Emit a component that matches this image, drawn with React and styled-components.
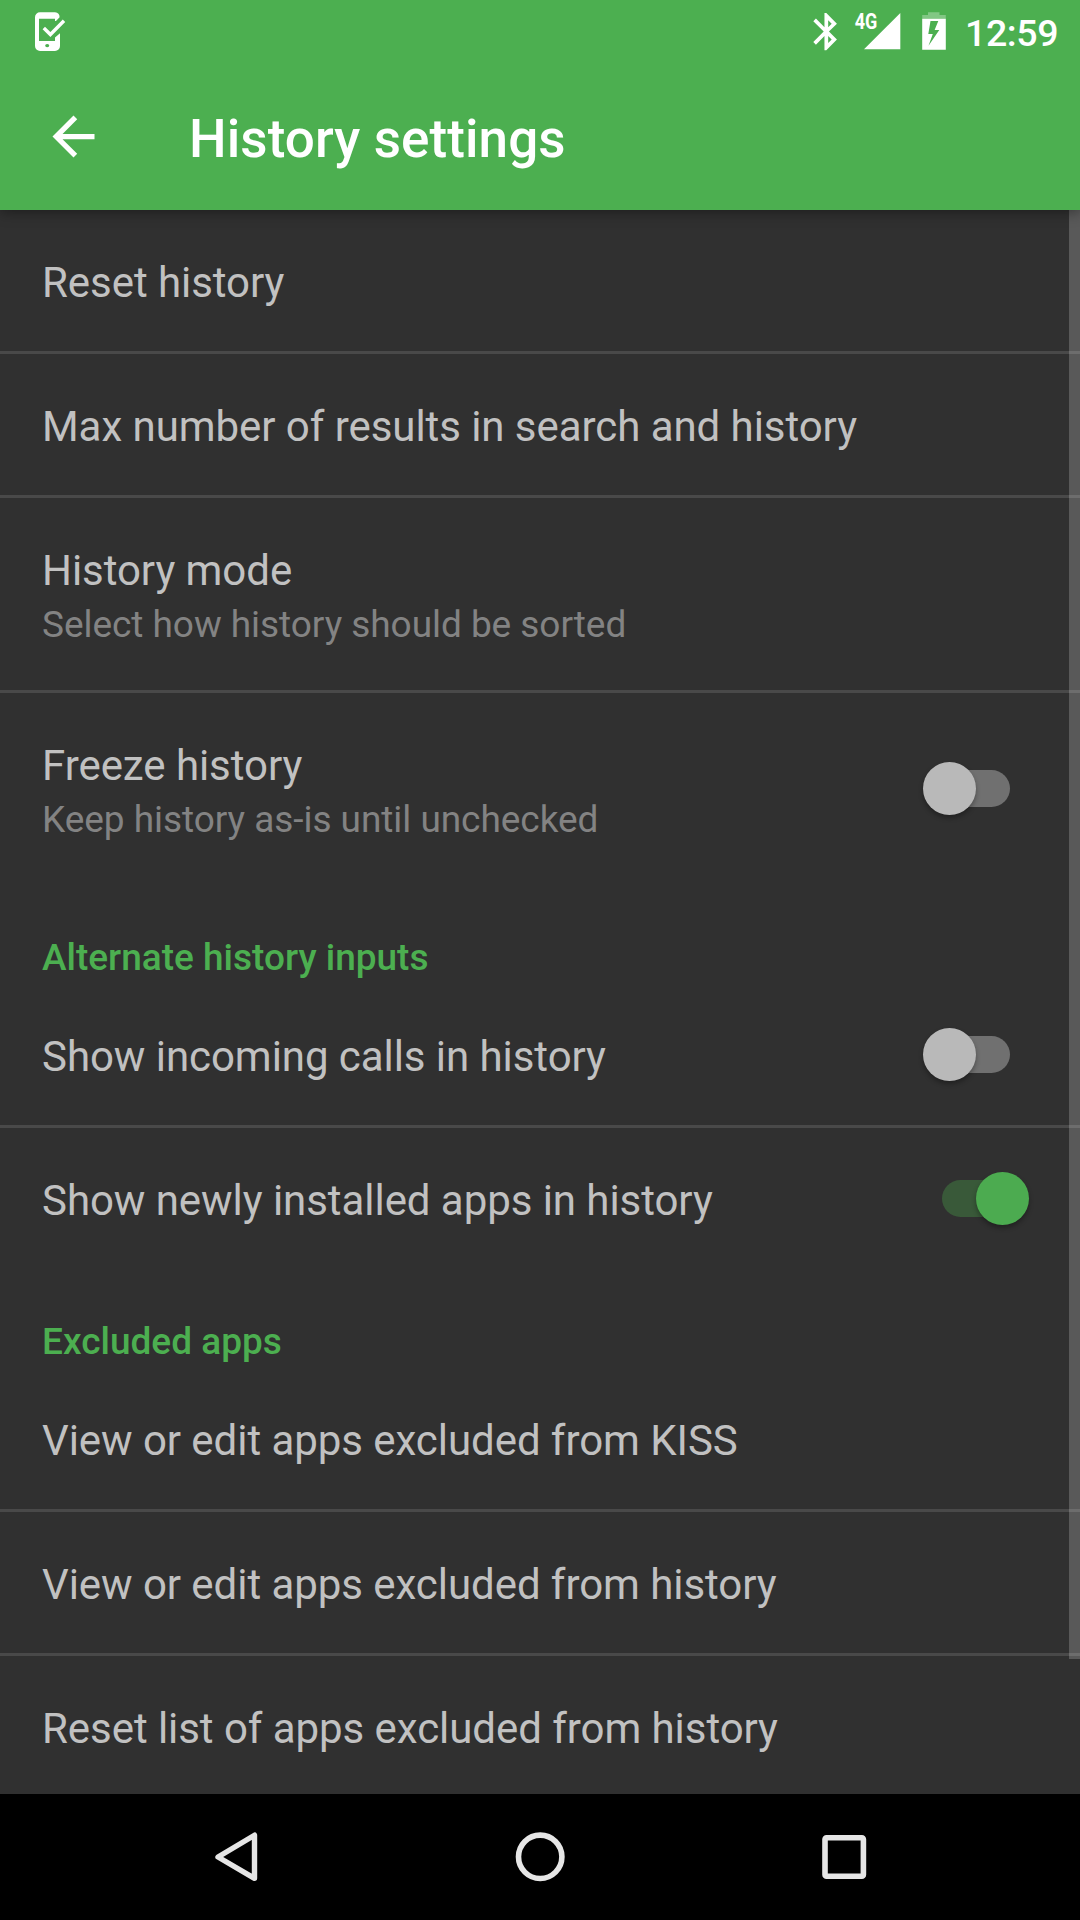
import React from "react";
import styled, { createGlobalStyle } from "styled-components";

const GlobalStyle = createGlobalStyle`
  * { box-sizing: border-box; }
  html, body { margin: 0; padding: 0; background: #000; }
  body { font-family: Roboto, "Noto Sans", sans-serif; overflow: hidden; }
`;

const Screen = styled.div`
  width: 1080px;
  height: 1920px;
  display: flex;
  flex-direction: column;
  background: #303030;
  overflow: hidden;
`;

const Header = styled.header`
  flex: none;
  height: 210px;
  display: flex;
  flex-direction: column;
  background: #4caf50;
  position: relative;
  z-index: 1;
  box-shadow: 0 3px 12px rgba(0, 0, 0, 0.36);
`;

const StatusBar = styled.div`
  height: 72px;
  display: flex;
  align-items: flex-start;
  padding: 0 22px 0 32px;
  color: #fff;
`;

const StatusIcons = styled.div`
  margin-left: auto;
  display: flex;
  align-items: flex-start;
`;

const StatusSvg = styled.svg`
  display: block;
  flex: none;
  margin-right: ${(p) => p.$gap || 0}px;
`;

const Clock = styled.span`
  width: 93px;
  font-size: 37.5px;
  font-weight: 500;
  line-height: 44px;
  padding-top: 11px;
  letter-spacing: -0.4px;
  white-space: nowrap;
`;

const AppBar = styled.div`
  flex: 1;
  display: flex;
  align-items: center;
  padding-left: 42px;
  color: #fff;
`;

const BackButton = styled.button`
  display: flex;
  width: 64px;
  height: 64px;
  padding: 0;
  border: 0;
  background: none;
  color: inherit;
  margin: 0 83px 8px 0;
`;

const PageTitle = styled.h1`
  margin: 0 0 4px;
  font-size: 53px;
  font-weight: 500;
  line-height: 64px;
  letter-spacing: 0.1px;
  white-space: nowrap;
`;

const Content = styled.main`
  flex: 1;
  min-height: 0;
  position: relative;
  overflow: hidden;
`;

const Row = styled.div`
  height: ${(p) => (p.$tall ? 192 : 141)}px;
  display: flex;
  align-items: center;
  justify-content: space-between;
  padding: 0 51px 0 42px;
`;

const Divider = styled.hr`
  height: 3px;
  margin: 0;
  border: 0;
  background: #494949;
`;

const Labels = styled.div`
  display: flex;
  flex-direction: column;
`;

const Title = styled.span`
  font-size: 42px;
  line-height: 50px;
  padding-top: 5px;
  color: #c1c1c1;
  white-space: nowrap;
  letter-spacing: -0.055px;
`;

const Summary = styled.span`
  margin: 3px 0 -3px;
  font-size: 37px;
  line-height: 52px;
  letter-spacing: -0.05px;
  color: #838383;
  white-space: nowrap;
`;

const Category = styled.h2`
  height: 99px;
  margin: 0;
  padding: 52px 42px 0;
  font-size: 37px;
  line-height: 42px;
  font-weight: 500;
  color: #4caf50;
  white-space: nowrap;
`;

const Switch = styled.div`
  width: 106px;
  height: 53px;
  margin-bottom: ${(p) => (p.$tall ? 1 : 0)}px;
  display: grid;
  align-items: center;
  & > * { grid-area: 1 / 1; }
`;

const Track = styled.div`
  width: 68px;
  height: 37px;
  border-radius: 19px;
  justify-self: center;
  background: ${(p) => (p.$on ? "#395939" : "#707070")};
`;

const Thumb = styled.div`
  width: 53px;
  height: 53px;
  border-radius: 50%;
  justify-self: ${(p) => (p.$on ? "end" : "start")};
  background: ${(p) => (p.$on ? "#4cab50" : "#b9b9b9")};
  box-shadow: 0 3px 5px rgba(0, 0, 0, 0.32);
`;

const Scrollbar = styled.div`
  position: absolute;
  top: 0;
  right: 0;
  width: 11px;
  height: 1449px;
  background: rgba(255, 255, 255, 0.2);
`;

const NavBar = styled.nav`
  flex: none;
  height: 126px;
  display: grid;
  grid-template-columns: repeat(3, 304px);
  justify-content: center;
  align-items: center;
  justify-items: center;
  background: #000;
`;

const items = [
  { title: "Reset history", divider: true },
  { title: "Max number of results in search and history", divider: true },
  { title: "History mode", summary: "Select how history should be sorted", divider: true },
  { title: "Freeze history", summary: "Keep history as-is until unchecked", toggle: "off" },
  { category: "Alternate history inputs" },
  { title: "Show incoming calls in history", toggle: "off", divider: true },
  { title: "Show newly installed apps in history", toggle: "on" },
  { category: "Excluded apps" },
  { title: "View or edit apps excluded from KISS", divider: true },
  { title: "View or edit apps excluded from history", divider: true },
  { title: "Reset list of apps excluded from history", divider: true },
];

const PhoneCheck = () => (
  <StatusSvg width="34" height="54" viewBox="32 0 34 54">
    <path
      fill="#fff"
      fillRule="evenodd"
      d="M40 12.3H55a5 5 0 0 1 4.6 5L56 21H55V18.7H39V41H55V37.5L60 33.3V46a5 5 0 0 1-5 5H40a5 5 0 0 1-5-5V17.3a5 5 0 0 1 5-5ZM47.2 44a2 1.6 0 1 0 .01 0Z"
    />
    <path d="M43.8 28L50.4 34.5L64 20.7" fill="none" stroke="#fff" strokeWidth="3.4" />
  </StatusSvg>
);

const Bluetooth = () => (
  <StatusSvg width="45" height="54" viewBox="0 0 45 54" $gap={5}>
    <path
      fill="#fff"
      transform="translate(0 9.3) scale(1.86)"
      d="M17.71 7.71L12 2h-1v7.59L6.41 5 5 6.41 10.59 12 5 17.59 6.41 19 11 14.41V22h1l5.71-5.71-4.3-4.29 4.3-4.29zM13 5.83l1.88 1.88L13 9.59V5.83zm1.88 10.46L13 18.17v-3.76l1.88 1.88z"
    />
  </StatusSvg>
);

const Signal = () => (
  <StatusSvg width="48" height="54" viewBox="854 0 48 54" $gap={18}>
    <path d="M900.3 13V49.3H864Z" fill="#fff" />
    <text
      x="854.8"
      y="29"
      fill="#fff"
      fontFamily="Roboto, sans-serif"
      fontWeight="700"
      fontSize="21.5"
      textLength="22.6"
      lengthAdjust="spacingAndGlyphs"
    >
      4G
    </text>
  </StatusSvg>
);

const Battery = () => (
  <StatusSvg width="28" height="54" viewBox="920 0 28 54" $gap={17}>
    <path d="M928 12.3H939.5V15H945.8V18.7H922.2V15H928Z" fill="#fff" fillOpacity="0.3" />
    <path
      d="M922.2 18.7H945.8V49.8H922.2ZM930.5 21L928.3 34H932.8L928.5 45.7L939.3 30H934.6L938.3 21Z"
      fill="#fff"
      fillRule="evenodd"
    />
  </StatusSvg>
);

const Toggle = ({ on, tall }) => (
  <Switch role="switch" aria-checked={on} $tall={tall}>
    <Track $on={on} />
    <Thumb $on={on} />
  </Switch>
);

const Item = ({ item }) => {
  if (item.category) return <Category>{item.category}</Category>;
  const tall = Boolean(item.summary);
  return (
    <>
      <Row $tall={tall}>
        <Labels>
          <Title>{item.title}</Title>
          {item.summary && <Summary>{item.summary}</Summary>}
        </Labels>
        {item.toggle && <Toggle on={item.toggle === "on"} tall={tall} />}
      </Row>
      {item.divider && <Divider />}
    </>
  );
};

export default function App() {
  return (
    <>
      <GlobalStyle />
      <Screen>
        <Header>
          <StatusBar>
            <PhoneCheck />
            <StatusIcons>
              <Bluetooth />
              <Signal />
              <Battery />
              <Clock>12:59</Clock>
            </StatusIcons>
          </StatusBar>
          <AppBar>
            <BackButton aria-label="Back">
              <svg width="63" height="63" viewBox="0 0 24 24">
                <path fill="currentColor" d="M20 11H7.83l5.59-5.59L12 4l-8 8 8 8 1.41-1.41L7.83 13H20v-2z" />
              </svg>
            </BackButton>
            <PageTitle>History settings</PageTitle>
          </AppBar>
        </Header>
        <Content>
          {items.map((item) => (
            <Item key={item.title || item.category} item={item} />
          ))}
          <Scrollbar />
        </Content>
        <NavBar>
          <svg width="60" height="60" viewBox="206 1827 60 60">
            <path
              d="M254.5 1835.2V1878.3L218 1857Z"
              fill="none"
              stroke="#e6e6e6"
              strokeWidth="5.4"
              strokeLinejoin="round"
            />
          </svg>
          <svg width="60" height="60" viewBox="510 1827 60 60">
            <circle cx="540.2" cy="1856.8" r="21.7" fill="none" stroke="#e6e6e6" strokeWidth="5.6" />
          </svg>
          <svg width="60" height="60" viewBox="814 1827 60 60">
            <rect x="825" y="1837.7" width="38.4" height="38.6" rx="1.5" fill="none" stroke="#e6e6e6" strokeWidth="5.6" />
          </svg>
        </NavBar>
      </Screen>
    </>
  );
}
